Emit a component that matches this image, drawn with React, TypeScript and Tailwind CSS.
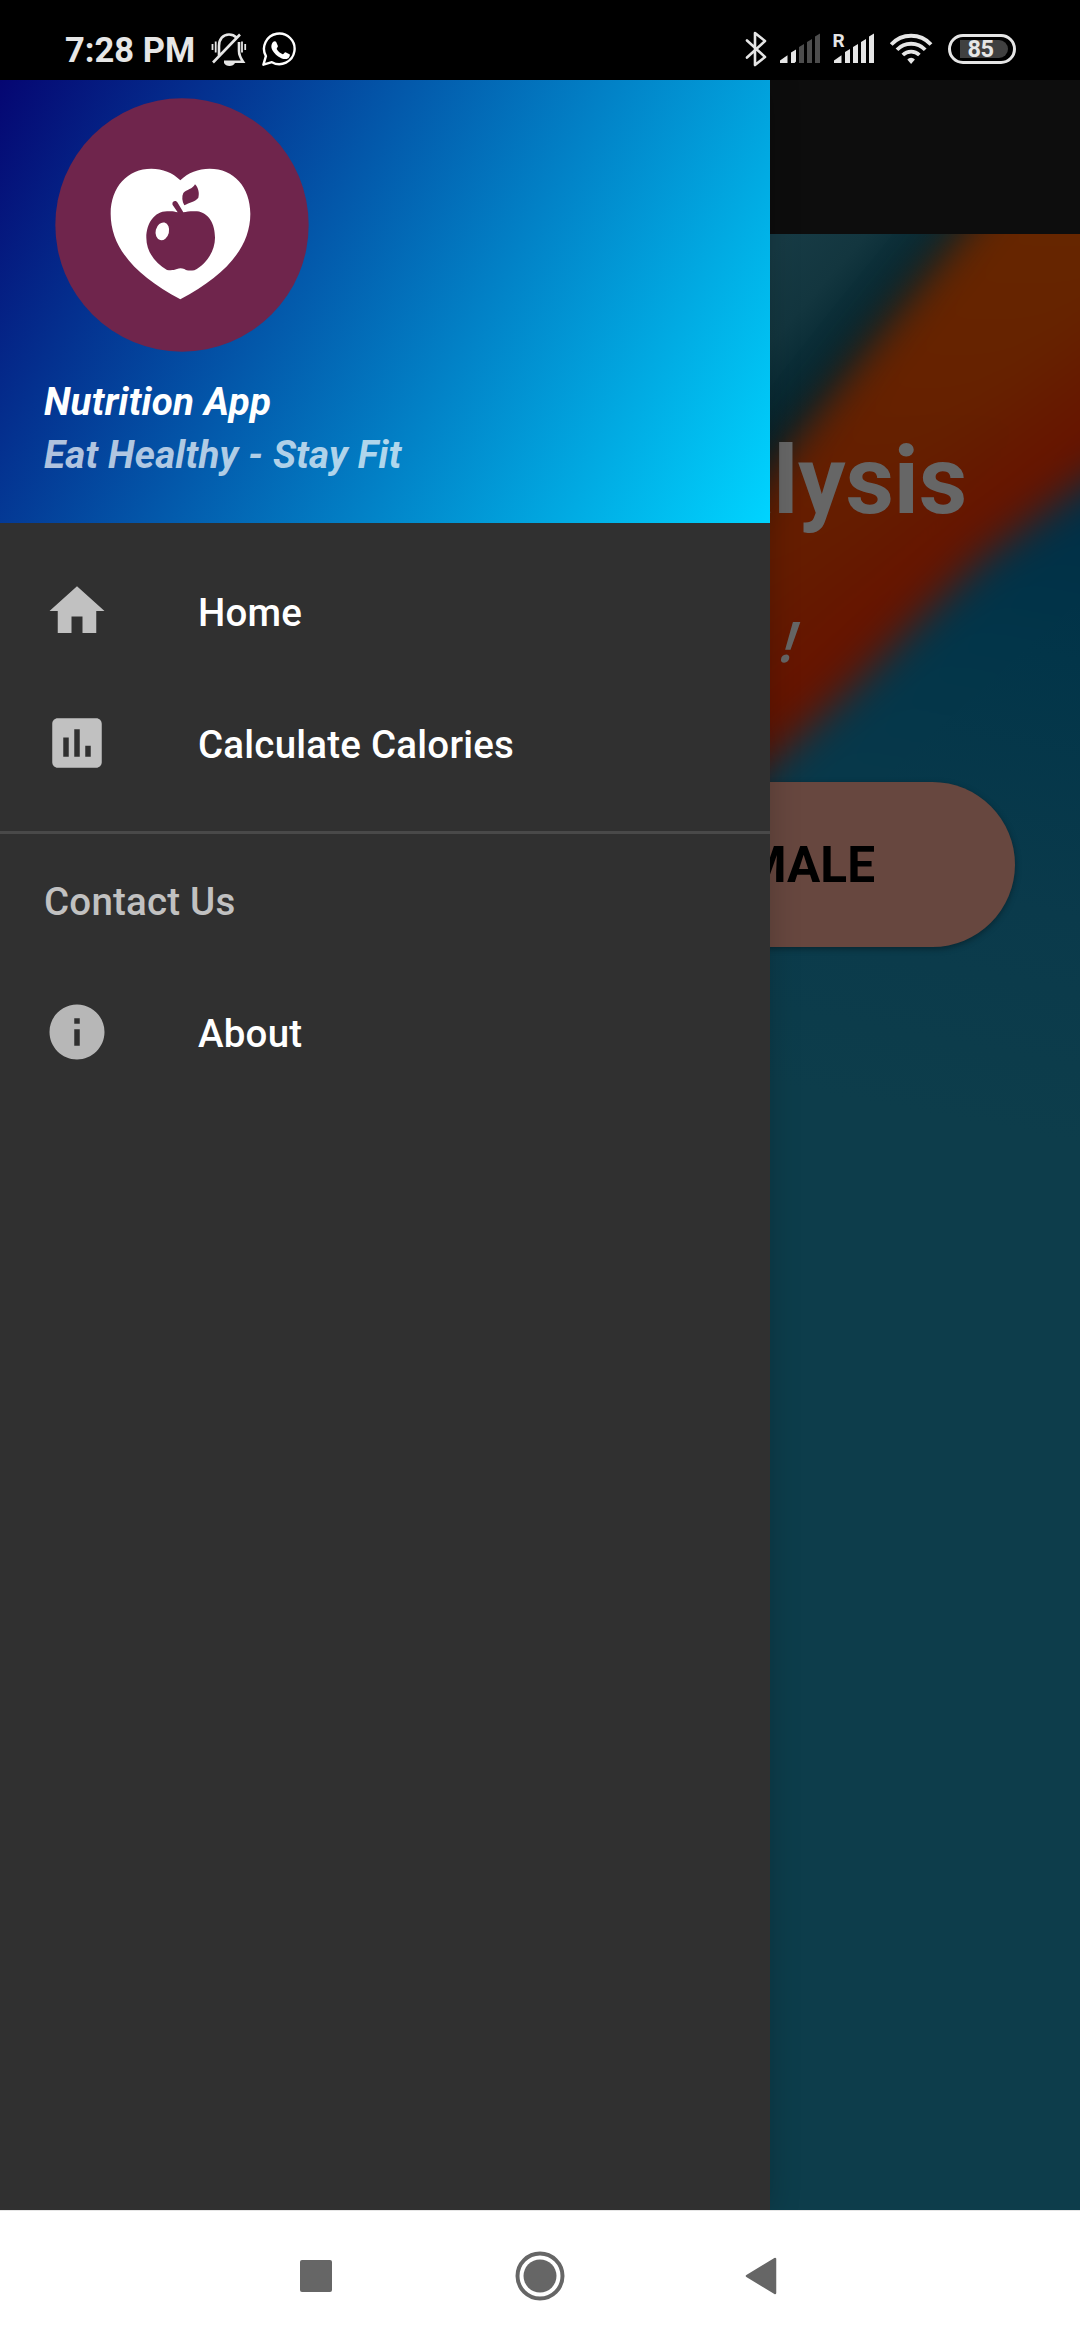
import React from "react";

function StatusBar() {
  return (
    <header className="flex h-20 items-center justify-between bg-black pl-[65px] pr-[64px] text-[#e6e6e6]">
      <div className="flex h-full items-center">
        <span className="w-[146px] whitespace-nowrap pt-[19px] text-[34.5px] font-bold leading-[40px]">7:28 PM</span>
        <svg className="h-20 w-[36px]" viewBox="210 0 36 80" fill="none" stroke="#e6e6e6" strokeWidth="2.6">
          <path d="M218 56V46c0-7 4-11.500 10-11.500 3 0 5.500 1 7.500 3M238 42v9c0 4 1.500 7 4 10.700H223M212 62.500l27-28" />
          <path d="M211.500 44v6M214.700 41.500v11M241 41.500v11M244.200 44v6" strokeWidth="1.8" />
          <path d="M223 63h11c-1 2-3 3-5.500 3s-4.500-1-5.500-3z" fill="#e6e6e6" stroke="none" />
        </svg>
        <svg className="ml-[14px] h-20 w-[36px]" viewBox="260 0 36 80" fill="none">
          <path d="M262.400 64.700l2.500-8.500a15.300 15.300 0 1 1 6 6z" stroke="#fff" strokeWidth="2.4" strokeLinejoin="round" />
          <path d="M272 42c1-1 2.700-1 3.200 0l1.700 4c.3.800-1.500 2.500-1.200 3 1.400 2.600 3.500 4.200 6 5.200.7.200 2-2.200 2.800-2l4 2c1 .5-.2 3.300-1.300 4-2.700 1.800-6.500.500-10-1.800-3-2-6-5.500-6.700-8.400-.5-2.300.2-4.500 1.500-6z" fill="#fff" />
        </svg>
      </div>
      <div className="flex h-full items-center">
        <svg className="h-20 w-[203px]" viewBox="745 0 203 80">
          <path d="M747 40.500l18 16.500-10 8V33l10 8-18 16.500" fill="none" stroke="#e6e6e6" strokeWidth="2.600" strokeLinejoin="round" strokeLinecap="round" />
          <g fill="#e6e6e6">
            <path d="M780 63v-2.500l7.500-5.200V63zM791 63V52.500l5-3V61.500l-1.500 1.500z" />
            <path d="M799 63V47l5-3V63zM807 63V42l5-3V63zM815 63V36.500l5-3V63z" fill="#4d4d4d" />
            <path d="M834 63v-2.500l7.500-5.200V63zM845 63V52l5-3V63zM853 63V47l5-3V63zM861 63V42l5-3V63zM869 63V36.500l5-3V63z" />
            <path d="M907.300 59.500a5 5 0 0 1 7.600 0l-3.800 4.500z" />
          </g>
          <g fill="none" stroke="#e6e6e6" strokeWidth="3.800">
            <path d="M891.200 44.500a27 27 0 0 1 39.800 0M897 49.800a19.500 19.500 0 0 1 28.200 0M902.800 55a12 12 0 0 1 16.600 0" />
          </g>
          <text x="832.500" y="47" fontFamily="Roboto" fontSize="19" fontWeight="700" fill="#e6e6e6">R</text>
        </svg>
        <div className="mt-[17px] flex h-[30px] w-[68px] items-center justify-center rounded-full border-[3px] border-[#e6e6e6]">
          <div className="ml-1 flex h-[18px] w-[48px] items-center justify-center rounded-l-sm rounded-r-full bg-[#404040] pr-[7px] text-[23.5px] font-bold leading-[18px] tracking-[-0.5px]">
            85
          </div>
        </div>
      </div>
    </header>
  );
}

function Wallpaper() {
  return (
    <svg className="absolute inset-0 h-full w-full" viewBox="0 234 1080 1976" preserveAspectRatio="none">
      <defs>
        <linearGradient id="sea" gradientUnits="userSpaceOnUse" x1="1080" y1="500" x2="960" y2="1120">
          <stop offset="0" stopColor="#002f46" />
          <stop offset=".25" stopColor="#023549" />
          <stop offset=".65" stopColor="#0a3a4b" />
          <stop offset="1" stopColor="#0d3d4b" />
        </linearGradient>
        <linearGradient id="teal" gradientUnits="userSpaceOnUse" x1="790" y1="230" x2="890" y2="318">
          <stop offset="0" stopColor="#173b45" />
          <stop offset=".45" stopColor="#13363f" />
          <stop offset="1" stopColor="#00222c" />
        </linearGradient>
        <linearGradient id="flame" gradientUnits="userSpaceOnUse" x1="0" y1="234" x2="0" y2="600">
          <stop offset="0" stopColor="#662600" />
          <stop offset=".4" stopColor="#662200" />
          <stop offset=".7" stopColor="#651e00" />
          <stop offset="1" stopColor="#651c00" />
        </linearGradient>
        <linearGradient id="ember" gradientUnits="userSpaceOnUse" x1="836" y1="524" x2="917" y2="614">
          <stop offset="0" stopColor="#661200" stopOpacity="0" />
          <stop offset="1" stopColor="#661200" />
        </linearGradient>
        <filter id="soft" filterUnits="userSpaceOnUse" x="500" y="0" width="900" height="1200" colorInterpolationFilters="sRGB">
          <feGaussianBlur stdDeviation="20" />
        </filter>
      </defs>
      <rect y="234" width="1080" height="1976" fill="url(#sea)" />
      <path d="M400 100H1100V480L770 765H400z" fill="url(#teal)" />
      <g filter="url(#soft)">
        <path d="M1068 100L957 238 870 345 770 472 680 590V1000H1400V0z" fill="url(#flame)" />
        <path d="M1068 100L957 238 870 345 770 472 680 590V1000H1400V0z" fill="url(#ember)" />
        <path d="M500 985L770 763 850 690 917 622 983 558 1080 486 1400 280V1200H500z" fill="url(#sea)" />
      </g>
      <path d="M500 1110L770 880 1080 600V2210H500z" fill="url(#sea)" />
    </svg>
  );
}

function Screen() {
  return (
    <main className="flex h-full flex-col">
      <div className="h-[154px] bg-[#0d0d0d]" />
      <section className="relative flex-1 overflow-hidden">
        <Wallpaper />
        <div className="relative flex flex-col items-end">
          <h1 className="mr-[113px] mt-[189px] text-[94.500px] font-bold leading-[116px] tracking-[-0.2px] text-[#666]">Analysis</h1>
          <p className="mr-[283px] mt-[68px] -skew-x-6 font-['Open_Sans',sans-serif] text-[56px] font-semibold italic leading-[66px] text-[#666]">!</p>
          <button className="mr-[65px] mt-[109px] flex h-[165px] w-[420px] items-center justify-end rounded-full bg-[#67473f] pr-[140px] pt-[2px] text-[49.500px] font-bold text-black shadow-[0_2px_6px_rgba(0,0,0,0.35)]">
            FEMALE
          </button>
        </div>
      </section>
    </main>
  );
}

function Logo() {
  return (
    <svg className="ml-[11px] h-[254px] w-[254px] shrink-0" viewBox="45 53 760 762">
      <circle cx="425" cy="434" r="380" fill="#6f254c" />
      <path d="M420 300C397 277 367 265 333 265C262 265 211 320 211 400C211 505 290 588 420 657C550 588 630 505 630 400C630 320 580 265 508 265C474 265 443 277 420 300z" fill="#fff" />
      <g fill="#6f254c">
        <path d="M412 396L397 374C393 364 405 358 411 366L429 396C440 393 455 392 470 393C505 397 524 430 524 472C524 512 498 552 462 570C445 572 438 570 432 566C424 563 417 563 410 566C400 570 392 570 380 569C345 548 318 515 318 472C318 430 342 393 380 393C395 392 402 393 412 396z" />
        <path d="M432 375C425 364 424 348 429 338C438 328 458 326 464 312C474 322 478 338 474 352C466 364 446 366 432 375z" />
      </g>
      <ellipse cx="366" cy="453" rx="20" ry="27" transform="rotate(14 366 453)" fill="#fff" />
    </svg>
  );
}

const HOME = "M10 20v-6h4v6h5v-8h3L12 3 2 12h3v8z";
const CHART =
  "M19 3H5c-1.100 0-2 .9-2 2v14c0 1.100.9 2 2 2h14c1.100 0 2-.9 2-2V5c0-1.100-.9-2-2-2zM9 17H7v-7h2v7zm4 0h-2V7h2v10zm4 0h-2v-4h2v4z";
const INFO = "M12 2C6.480 2 2 6.480 2 12s4.480 10 10 10 10-4.480 10-10S17.520 2 12 2zm1 15h-2v-6h2v6zm0-8h-2V7h2v2z";

function MenuRow({ path, label, tone }: { path: string; label: string; tone: string }) {
  return (
    <li className="flex h-[132px] items-center gap-[88px] px-11">
      <svg className="h-[66px] w-[66px]" viewBox="0 0 24 24" fill={tone}>
        <path d={path} />
      </svg>
      <span className="pt-[3px] text-[38.500px] font-medium leading-[46px] tracking-[0.22px] text-white">{label}</span>
    </li>
  );
}

function Drawer() {
  return (
    <aside className="absolute inset-y-0 left-0 flex w-[770px] flex-col bg-[#303030] shadow-[0_0_30px_rgba(0,0,0,0.2)]">
      <div className="flex h-[443px] flex-col bg-[linear-gradient(119.9deg,#050672_0%,#00d4ff_100%)] px-11 pt-[18px]">
        <Logo />
        <p className="mt-[27px] text-[38.500px] font-bold italic leading-[45px] tracking-[0.25px] text-white">Nutrition App</p>
        <p className="mt-[8px] text-[38.500px] font-bold italic leading-[45px] tracking-[0.25px] text-white/70">Eat Healthy - Stay Fit</p>
      </div>
      <nav className="pt-[22px]">
        <ul>
          <MenuRow path={HOME} label="Home" tone="#c1c1c1" />
          <MenuRow path={CHART} label="Calculate Calories" tone="#c1c1c1" />
        </ul>
        <div className="mt-[22px] h-[3px] bg-[#494949]" />
        <h2 className="flex h-[132px] items-center px-11 pt-[3px] text-[38.500px] font-medium tracking-[0.2px] text-[#c1c1c1]">Contact Us</h2>
        <ul>
          <MenuRow path={INFO} label="About" tone="#b7b7b7" />
        </ul>
      </nav>
    </aside>
  );
}

function NavigationBar() {
  return (
    <footer className="flex h-[130px] items-center justify-between border-t border-[#e6e6e6] bg-white pl-[300px] pr-[303px]">
      <div className="h-8 w-8 rounded-[2px] bg-[#666]" />
      <svg className="ml-[3px] h-[50px] w-[50px]" viewBox="0 0 50 50">
        <circle cx="25" cy="25" r="22.500" fill="none" stroke="#666" strokeWidth="4" />
        <circle cx="25" cy="25" r="16.500" fill="#666" />
      </svg>
      <svg className="h-[38px] w-[32px]" viewBox="0 0 32 38">
        <path d="M2 19L30 2V36z" fill="#666" stroke="#666" strokeWidth="2.500" strokeLinejoin="round" />
      </svg>
    </footer>
  );
}

export default function App() {
  return (
    <div className="flex h-[2340px] w-[1080px] flex-col overflow-hidden bg-black font-['Roboto',sans-serif]">
      <StatusBar />
      <div className="relative h-[2130px] overflow-hidden">
        <Screen />
        <Drawer />
      </div>
      <NavigationBar />
    </div>
  );
}
